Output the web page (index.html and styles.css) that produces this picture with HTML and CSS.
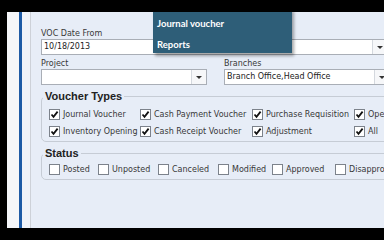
FILE: index.html
```html
<!DOCTYPE html>
<html lang="en">
<head>
    <meta charset="UTF-8">
    <title>Voucher List</title>
    <link rel="stylesheet" href="styles.css">
</head>
<body>
    <div class="screen">
        <div class="rail"></div>
        <div class="rail-line"></div>
        <div class="rail-gap"></div>
        <div class="panel">
            <h1 class="title">Voucher List</h1>

            <label class="field-label first">VOC Date From</label>
            <div class="combo wide">
                <span class="combo-text">10/18/2013</span>
                <span class="combo-btn"><span class="arrow"></span></span>
            </div>

            <div class="row">
                <div class="col">
                    <label class="field-label">Project</label>
                    <div class="combo">
                        <span class="combo-text"></span>
                        <span class="combo-btn"><span class="arrow"></span></span>
                    </div>
                </div>
                <div class="col">
                    <label class="field-label">Branches</label>
                    <div class="combo">
                        <span class="combo-text">Branch Office,Head Office</span>
                        <span class="combo-btn"><span class="arrow"></span></span>
                    </div>
                </div>
            </div>

            <fieldset class="group">
                <legend>Voucher Types</legend>
                <div class="types">
                    <span class="check on">Journal Voucher</span>
                    <span class="check on">Cash Payment Voucher</span>
                    <span class="check on">Purchase Requisition</span>
                    <span class="check on">Opening</span>
                    <span class="check on">Inventory Opening</span>
                    <span class="check on">Cash Receipt Voucher</span>
                    <span class="check on">Adjustment</span>
                    <span class="check on">All</span>
                </div>
            </fieldset>

            <fieldset class="group status">
                <legend>Status</legend>
                <div class="states">
                    <span class="check">Posted</span>
                    <span class="check">Unposted</span>
                    <span class="check">Canceled</span>
                    <span class="check">Modified</span>
                    <span class="check">Approved</span>
                    <span class="check">Disapproved</span>
                </div>
            </fieldset>

            <div class="menu">
                <div class="menu-item">Journal voucher</div>
                <div class="menu-item">Reports</div>
            </div>
        </div>
    </div>
</body>
</html>
```

FILE: styles.css
```css
body {
    margin: 0;
    background: #000;
    height: 240px;
    overflow: hidden;
    font-family: "DejaVu Sans", sans-serif;
    font-size: 8px;
    color: #2b2b2b;
}
.screen {
    display: flex;
    margin: 12px 0 0 7px;
    height: 216px;
    overflow: hidden;
}
.rail {
    width: 12px;
    background: #f5f6f9;
}
.rail-line {
    width: 3px;
    background: #1f5ba5;
}
.rail-gap {
    width: 8px;
    background: #f1f3f8;
    border-right: 1px solid #cdd1d8;
}
.panel {
    flex: 1;
    position: relative;
    background: #e7edf7;
    padding-left: 10px;
    overflow: hidden;
}
.title {
    margin: -13px 0 0 1px;
    font-family: "Liberation Sans", sans-serif;
    font-size: 15px;
    line-height: 16px;
    color: #222;
}
.field-label {
    display: block;
    line-height: 11px;
    margin-top: 3px;
    color: #383838;
}
.field-label.first {
    margin-top: 13px;
}
.combo {
    display: flex;
    width: 164px;
    height: 14px;
    background: #fff;
    border: 1px solid #a9aeb6;
}
.combo.wide {
    width: 345px;
}
.combo-text {
    flex: 1;
    padding-left: 2px;
    line-height: 14px;
    color: #222;
    white-space: nowrap;
}
.combo-btn {
    width: 14px;
    border-left: 1px solid #d4d8de;
    background: #f6f7f9;
    display: flex;
    align-items: center;
    justify-content: center;
}
.arrow {
    width: 0;
    height: 0;
    border-left: 3px solid transparent;
    border-right: 3px solid transparent;
    border-top: 3px solid #333;
}
.row {
    display: flex;
    gap: 17px;
}
.group {
    margin: 5px 0 0;
    width: 360px;
    padding: 7px 0 4px 7px;
    border: 1px solid #c6ccd5;
    border-radius: 5px;
}
.group legend {
    padding: 0 2px;
    margin-left: -6px;
    font-family: "Liberation Sans", sans-serif;
    font-weight: bold;
    font-size: 11px;
    line-height: 12px;
    color: #222;
}
.types {
    display: grid;
    grid-template-columns: 91px 112px 102px 100px;
    row-gap: 6px;
}
.states {
    display: grid;
    grid-template-columns: 49px 60px 60px 54px 63px 80px;
}
.group.status {
    padding-top: 5px;
}
.check {
    display: flex;
    align-items: center;
    gap: 2px;
    line-height: 11px;
    white-space: nowrap;
    color: #383838;
}
.check::before {
    content: "";
    width: 9px;
    height: 9px;
    border: 1px solid #7c828b;
    background: #fff;
    flex: none;
    margin-right: 1px;
}
.check.on::before {
    background: #fff url("data:image/svg+xml,%3Csvg xmlns='http://www.w3.org/2000/svg' viewBox='0 0 9 9'%3E%3Cpath d='M1.5 4.5 L3.5 6.8 L7.6 1.6' fill='none' stroke='%23111' stroke-width='1.8'/%3E%3C/svg%3E") center / 9px 9px no-repeat;
}
.menu {
    position: absolute;
    left: 122px;
    top: -4px;
    width: 139px;
    height: 45px;
    background: #2e5e78;
    box-shadow: 2px 3px 3px rgba(0, 0, 0, 0.35);
    padding-top: 5px;
    box-sizing: border-box;
}
.menu-item {
    font-family: Lato, sans-serif;
    font-weight: bold;
    font-size: 9.5px;
    line-height: 21px;
    color: #fff;
    padding-left: 4px;
}
```
